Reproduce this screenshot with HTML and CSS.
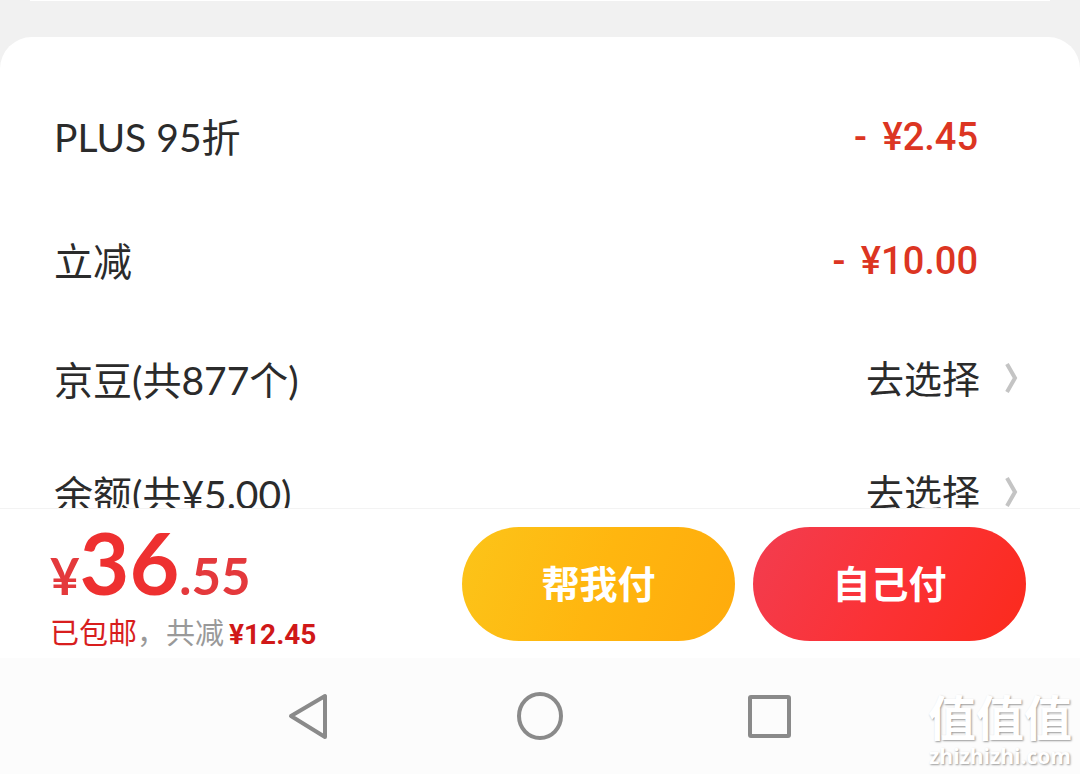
FILE: index.html
```
<!DOCTYPE html>
<html lang="zh-CN">
<head>
    <meta charset="UTF-8">
    <meta name="viewport" content="width=device-width, initial-scale=1.0">
    <title>确认订单</title>
    <link rel="stylesheet" href="styles.css">
</head>
<body>
    <div class="page">
        <!-- 优惠明细 -->
        <main class="content">
            <div class="prev-card"></div>
            <div class="card">
                <div class="row discount">
                    <span class="label">PLUS 95折</span>
                    <span class="amount"><span class="minus">-</span> ¥2.45</span>
                </div>
                <div class="row discount">
                    <span class="label">立减</span>
                    <span class="amount"><span class="minus">-</span> ¥10.00</span>
                </div>
                <div class="row">
                    <span class="label">京豆(共877个)</span>
                    <button type="button" class="select-btn">
                        去选择
                        <svg class="arrow" viewBox="0 0 14 32" aria-hidden="true"><path d="M2 2 L10 16 L2 30"/></svg>
                    </button>
                </div>
                <div class="row">
                    <span class="label">余额(共¥5.00)</span>
                    <button type="button" class="select-btn">
                        去选择
                        <svg class="arrow" viewBox="0 0 14 32" aria-hidden="true"><path d="M2 2 L10 16 L2 30"/></svg>
                    </button>
                </div>
            </div>
        </main>

        <!-- 底部支付栏 -->
        <footer class="pay-bar">
            <div class="total">
                <div class="price">¥<span class="price-int">36</span>.55</div>
                <div class="summary"><span class="free-ship">已包邮</span>，共减<span class="saved">¥12.45</span></div>
            </div>
            <div class="actions">
                <button type="button" class="pay-btn help">帮我付</button>
                <button type="button" class="pay-btn self">自己付</button>
            </div>
        </footer>

        <!-- 系统导航 -->
        <nav class="sys-nav">
            <button type="button" class="nav-btn" aria-label="返回">
                <svg viewBox="0 0 48 48"><path d="M39 4 V45 L5 24 Z"/></svg>
            </button>
            <button type="button" class="nav-btn" aria-label="主页">
                <svg viewBox="0 0 48 48"><ellipse cx="24" cy="24" rx="21" ry="22"/></svg>
            </button>
            <button type="button" class="nav-btn" aria-label="多任务">
                <svg viewBox="0 0 48 48"><rect x="4" y="5" width="39" height="39" rx="1"/></svg>
            </button>
        </nav>

        <div class="watermark">
            <div class="wm-name">值值值</div>
            <div class="wm-site">zhizhizhi.com</div>
        </div>
    </div>
</body>
</html>
```
FILE: styles.css
```
body {
    margin: 0;
    font-family: Lato, "Noto Sans CJK SC", sans-serif;
    color: #2b2b2b;
    background-color: #f1f1f1;
}
button {
    font-family: inherit;
    border: none;
    cursor: pointer;
}
.page {
    position: relative;
    display: flex;
    flex-direction: column;
    height: 100vh;
}
.content {
    flex: 1;
    min-height: 0;
    overflow: hidden;
}
.prev-card {
    height: 1px;
    margin: 0 30px 36px;
    background-color: #fff;
}
.card {
    padding: 38px 60px 0 54px;
    background-color: #fff;
    border-radius: 32px 32px 0 0;
}
.row {
    display: flex;
    justify-content: space-between;
    align-items: center;
    height: 114px;
    font-size: 39px;
    line-height: 56px;
}
.discount {
    height: 124px;
    padding-right: 42px;
}
.amount {
    font-family: Roboto, "Noto Sans CJK SC", sans-serif;
    font-size: 38px;
    font-weight: 500;
    color: #dc3522;
}
.minus {
    margin-right: 6px;
}
.select-btn {
    display: flex;
    align-items: center;
    gap: 24px;
    padding: 0 0 4px;
    background: none;
    color: inherit;
    font-size: 38px;
    line-height: 56px;
}
.arrow {
    width: 16px;
    height: 32px;
    fill: none;
    stroke: #c4c4c4;
    stroke-width: 4;
}
.pay-bar {
    display: flex;
    justify-content: space-between;
    align-items: center;
    height: 150px;
    padding: 0 54px 0 50px;
    box-sizing: border-box;
    border-top: 1px solid #f3f3f3;
    background-color: #fff;
}
.price {
    font-size: 51px;
    font-weight: 700;
    line-height: 60px;
    color: #e4393c;
}
.price-int {
    font-size: 86px;
    line-height: 100px;
    color: #ee3030;
}
.summary {
    font-size: 29px;
    line-height: 42px;
    color: #999;
}
.free-ship {
    color: #d81e1e;
}
.saved {
    margin-left: 5px;
    font-family: Roboto, sans-serif;
    font-size: 28px;
    font-weight: 700;
    color: #d01818;
}
.actions {
    display: flex;
    gap: 18px;
}
.pay-btn {
    width: 273px;
    height: 114px;
    padding: 0 0 4px;
    border-radius: 57px;
    color: #fff;
    font-size: 38px;
    font-weight: 700;
}
.help {
    background: linear-gradient(110deg, #fcc419, #ffb60f 50%, #ffab0c);
}
.self {
    background: linear-gradient(120deg, #f23d50, #fb3236 50%, #fb2a1c);
}
.sys-nav {
    display: flex;
    justify-content: center;
    align-items: center;
    gap: 182px;
    height: 116px;
    background-color: #fcfcfc;
}
.nav-btn {
    padding: 0;
    background: none;
}
.nav-btn svg {
    display: block;
    width: 48px;
    height: 48px;
    fill: none;
    stroke: #8a8a8a;
    stroke-width: 4;
    stroke-linejoin: round;
}
.watermark {
    position: absolute;
    right: 8px;
    bottom: 4px;
    text-align: center;
    color: #fff;
    text-shadow: 1px 1px 2px #999;
    pointer-events: none;
}
.wm-name {
    font-size: 48px;
    font-weight: 700;
    line-height: 48px;
}
.wm-site {
    font-family: "Open Sans", sans-serif;
    font-size: 21px;
    font-weight: 700;
    line-height: 28px;
}
```
